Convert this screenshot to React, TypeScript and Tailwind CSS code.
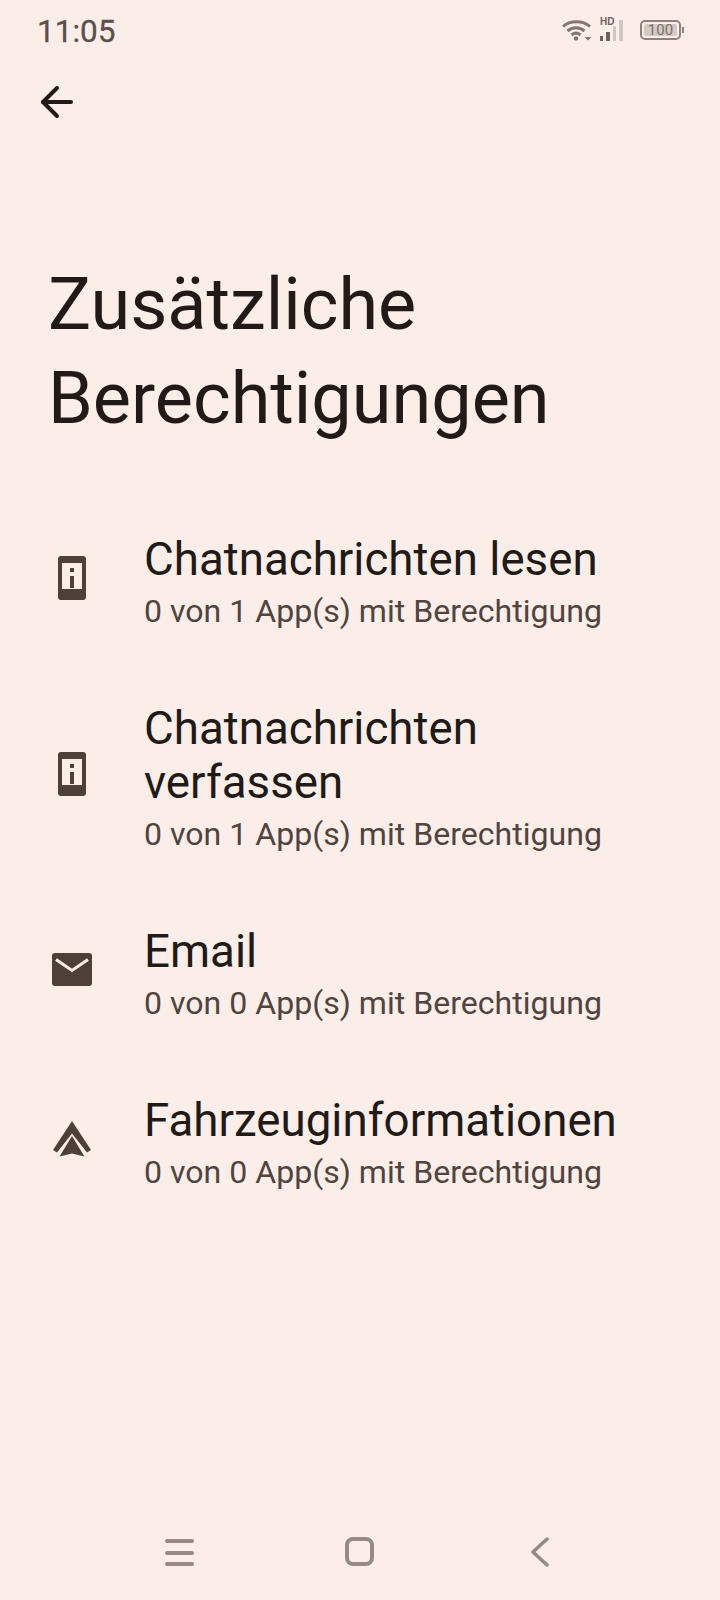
import React from 'react';
import { ArrowLeft } from 'lucide-react';

const PhoneInfoIcon = () => (
  <svg width="48" height="48" viewBox="0 0 48 48" fill="none">
    <path fillRule="evenodd" clipRule="evenodd" d="M13 2h22a3 3 0 0 1 3 3v38a3 3 0 0 1-3 3H13a3 3 0 0 1-3-3V5a3 3 0 0 1 3-3ZM14 9v26h20V9H14Z" fill="#4e4039" />
    <rect x="22" y="14" width="4" height="4" fill="#4e4039" />
    <rect x="22" y="22" width="4" height="12" fill="#4e4039" />
  </svg>
);

const MailIcon = () => (
  <svg width="48" height="48" viewBox="0 0 48 48" fill="none">
    <path d="M4 10a3 3 0 0 1 3-3h34a3 3 0 0 1 3 3v27a3 3 0 0 1-3 3H7a3 3 0 0 1-3-3V10Z" fill="#4e4039" />
    <path d="M8 13.500l16 11 16-11" stroke="#fbeee9" strokeWidth="3" fill="none" />
  </svg>
);

const AutoIcon = () => (
  <svg width="48" height="48" viewBox="0 0 48 48" fill="none">
    <path d="M24 6L43 35l-4 2.500L24 18.500 9 37.500 5 35 24 6Z" fill="#4e4039" />
    <path d="M24 21L11.500 41.500 24 38.500 36.500 41.500 24 21Z" fill="#4e4039" />
  </svg>
);

const rows = [
  { icon: <PhoneInfoIcon />, title: ['Chatnachrichten lesen'], sub: '0 von 1 App(s) mit Berechtigung' },
  { icon: <PhoneInfoIcon />, title: ['Chatnachrichten', 'verfassen'], sub: '0 von 1 App(s) mit Berechtigung' },
  { icon: <MailIcon />, title: ['Email'], sub: '0 von 0 App(s) mit Berechtigung' },
  { icon: <AutoIcon />, title: ['Fahrzeuginformationen'], sub: '0 von 0 App(s) mit Berechtigung' },
];

const StatusIcons = () => (
  <div className="flex items-center">
    {/* wifi */}
    <svg width="30" height="22" viewBox="0 0 30 22" fill="none">
      <path d="M1 7.500C8 1 21 1 28 7.500" stroke="#83756f" strokeWidth="3" />
      <path d="M5.500 12c5-4.200 12-4.200 17 0" stroke="#83756f" strokeWidth="3" />
      <path d="M9.500 16c2.800-2.300 6.200-2.300 9 0" stroke="#83756f" strokeWidth="3" />
      <circle cx="14" cy="19.500" r="2.300" fill="#83756f" />
      <path d="M22.500 18h7l-3.500 3.500L22.500 18Z" fill="#83756f" />
    </svg>
    {/* signal */}
    <div className="relative w-[25px] h-[22px] ml-[8px]">
      <span className="absolute left-0 top-[-2px] text-[10px] leading-[10px] font-bold text-[#6f625c] font-['Liberation_Sans',sans-serif]">HD</span>
      <div className="absolute bottom-0 left-0 flex items-end gap-[3px]">
        <div className="w-[3px] h-[5px] bg-[#6f625c]" />
        <div className="w-[4px] h-[9px] bg-[#6f625c]" />
        <div className="w-[3px] h-[15px] bg-[#cfc6c1]" />
        <div className="w-[4px] h-[21px] bg-[#cfc6c1]" />
      </div>
    </div>
    {/* battery */}
    <div className="flex items-center ml-[15px]">
      <div className="w-[41px] h-[20px] rounded-[5px] border-2 border-[#8f827c] p-[2px]">
        <div className="w-full h-full bg-[#d3cac5] rounded-[2px] flex items-center justify-center text-[15px] leading-none text-[#7d706a]">100</div>
      </div>
      <div className="w-[2px] h-[6px] bg-[#8f827c] ml-[1px]" />
    </div>
  </div>
);

export default function App() {
  return (
    <div className="w-[720px] h-[1600px] bg-[#fbeee9] flex flex-col font-['Roboto',sans-serif] overflow-hidden">
      <div className="h-[60px] flex items-center justify-between pl-[37px] pr-[36px] shrink-0">
        <span className="mt-[3px] text-[31.5px] leading-none text-[#5a4f4a] [-webkit-text-stroke:0.3px_#5a4f4a]">11:05</span>
        <StatusIcons />
      </div>

      <div className="h-[84px] flex items-center pl-[33px] shrink-0">
        <ArrowLeft size={48} strokeWidth={4} color="#211a17" absoluteStrokeWidth />
      </div>

      <h1 className="mt-[114px] pl-[48px] text-[72px] leading-[94px] text-[#211a17] font-normal">
        Zusätzliche
        <br />
        Berechtigungen
      </h1>

      <div className="mt-[53px] flex flex-col">
        {rows.map((row, i) => (
          <div key={i} className="flex items-center pl-[48px] py-[33.5px]">
            <div className="w-[48px] h-[48px] shrink-0 mb-[11px]">{row.icon}</div>
            <div className="ml-[48px]">
              <div className="text-[45.7px] leading-[54px] text-[#211a17]">
                {row.title.map((line) => (
                  <div key={line}>{line}</div>
                ))}
              </div>
              <div className="text-[32.1px] leading-[48px] text-[#51443e]">{row.sub}</div>
            </div>
          </div>
        ))}
      </div>

      <div className="mt-auto h-[96px] flex items-start pl-[165px] pt-[33px] shrink-0">
        <div className="w-[29px] h-[27px] mt-[2px] flex flex-col justify-between">
          <div className="h-[4px] rounded-full bg-[#958a85]" />
          <div className="h-[4px] rounded-full bg-[#958a85]" />
          <div className="h-[4px] rounded-full bg-[#958a85]" />
        </div>
        <div className="w-[29px] h-[29px] ml-[151px] rounded-[8px] border-4 border-[#958a85]" />
        <svg className="ml-[156px]" width="20" height="30" viewBox="0 0 20 30" fill="none">
          <path d="M17 2L3 15l14 13" stroke="#958a85" strokeWidth="3.500" strokeLinecap="round" strokeLinejoin="round" />
        </svg>
      </div>
    </div>
  );
}
